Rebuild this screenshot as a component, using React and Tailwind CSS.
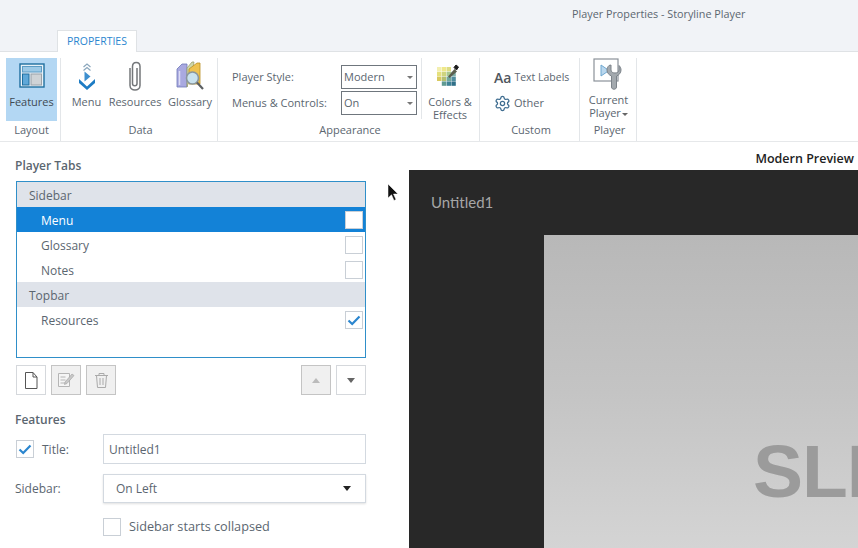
import React from "react";
import { Settings } from "lucide-react";

function FeaturesIcon() {
  return (
    <svg width="26" height="26" viewBox="0 0 26 26">
      <rect x="1" y="1" width="24" height="23" fill="#e8f1f8" stroke="#1f6f9f" strokeWidth="1.4" />
      <rect x="3.5" y="3.5" width="19" height="5.5" fill="#9cc9e6" stroke="#5c9cc4" />
      <rect x="3.5" y="11" width="6.5" height="11" fill="#5fa8d8" stroke="#1f6f9f" />
      <rect x="12" y="11" width="10.5" height="11" fill="#cfd3d6" stroke="#9aa2a8" />
    </svg>
  );
}

function MenuIcon() {
  return (
    <svg width="20" height="30" viewBox="0 0 20 30">
      <path d="M6.5 6 10 3l3.500 3M6.500 9.500 10 6.500l3.500 3" fill="none" stroke="#8aa6bc" strokeWidth="1.200" />
      <path d="M7.500 10.500v10l6-5z" fill="#3d8fcf" />
      <path d="M2 18l8 7.500 8-7.500v4l-8 7-8-7z" fill="#1d7cc4" />
    </svg>
  );
}

function PaperclipIcon() {
  return (
    <svg width="14" height="31" viewBox="0 0 14 31">
      <path
        d="M2 7v17.500c0 6 10 6 10 0V5.500c0-5.500-7.500-5.500-7.500 0v17c0 3 4.500 3 4.500 0V7"
        fill="none"
        stroke="#74777a"
        strokeWidth="1.500"
      />
    </svg>
  );
}

function GlossaryIcon() {
  return (
    <svg width="29" height="31" viewBox="0 0 29 31">
      <path d="M1 8l5-5h5v23H1z" fill="#a9a9e0" stroke="#6f78b8" strokeWidth="0.800" />
      <path d="M3.500 10v14" stroke="#dcdcf5" strokeWidth="1.500" />
      <path d="M11 7l5-6h2l-1 6-6 19z" fill="#cfd8a8" stroke="#9aa070" strokeWidth="0.800" />
      <path d="M13 8l8-6h3v21H13z" fill="#eec24f" stroke="#b98f25" strokeWidth="0.800" />
      <circle cx="16.500" cy="17" r="6" fill="#c9e2ee" stroke="#8a969c" strokeWidth="1.600" />
      <path d="M21 21.500l6 6.500" stroke="#5c5f62" strokeWidth="2.200" />
    </svg>
  );
}

function ColorsIcon() {
  const cells = [
    ["#f3efb0", "#efe88a", "#dcdc84", ""],
    ["#e5e07c", "#cfd47e", "#a9c88f", "#7eb0a8"],
    ["#d8c95e", "#b5bf70", "#72a89c", "#4f8d9e"],
    ["", "#5f9a92", "#3f8396", "#2f6f88"],
  ];
  return (
    <svg width="24" height="24" viewBox="0 0 24 24">
      {cells.map((row, r) =>
        row.map((c, i) => c && <rect key={`${r}-${i}`} x={1 + i * 4.8} y={4 + r * 4.8} width="4.4" height="4.4" fill={c} />)
      )}
      <path d="M12 13.500l6.500-7.500 2.500 2.500-7.500 6.500z" fill="#5c5f50" />
      <path d="M18 4.500l2-2.500 2.500 2-2 3z" fill="#1d1d1d" stroke="#1d1d1d" />
    </svg>
  );
}

function PlayerIcon() {
  return (
    <svg width="32" height="33" viewBox="0 0 32 33">
      <rect x="1" y="1" width="24" height="22" fill="#fff" stroke="#8b9299" strokeWidth="1.2" />
      <path d="M8 7v11l8-5.500z" fill="#b9d7ee" stroke="#6fa8d0" />
      <path
        d="M16 7.500c-1.500 1.500-2 3-2 4.500 0 3 2 5 4.500 6v11c0 3 5 3 5 0V18c2.500-1 4.500-3 4.500-6 0-1.500-.5-3-2-4.500V12c0 2-2 3-4 3s-4-1-4-3V7z"
        fill="#a3a9ae"
        stroke="#7c838a"
      />
    </svg>
  );
}

function Check({ size = 14 }) {
  return (
    <svg width={size} height={size} viewBox="0 0 14 14">
      <path d="M1.500 7.500 5.200 11 12.500 3.500" fill="none" stroke="#2b86cf" strokeWidth="2.200" />
    </svg>
  );
}

function Box({ checked, fill }) {
  return (
    <div className={`w-[18px] h-[18px] border border-[#c9cfd6] flex items-center justify-center shrink-0 ${fill ? "bg-white" : ""}`}>
      {checked && <Check />}
    </div>
  );
}

function LargeButton({ icon, label, active }) {
  return (
    <div className={`flex flex-col items-center h-[63px] ${active ? "bg-[#b3d7f3] w-[51px]" : ""}`}>
      <div className="h-[36px] flex items-center justify-center">{icon}</div>
      <div className={`text-[11px] leading-[15px] ${active ? "text-[#3f4a52]" : "text-[#5b6670]"}`}>{label}</div>
    </div>
  );
}

function Group({ width, label, children }) {
  return (
    <div className="flex flex-col h-[83px] border-r border-[#e3e6e9] shrink-0" style={{ width }}>
      <div className="h-[63px] flex">{children}</div>
      <div className="h-[18px] pl-[3px] leading-[18px] text-center text-[11px] text-[#5b6670]">{label}</div>
    </div>
  );
}

function RibbonSelect({ value }) {
  return (
    <div className="w-[76px] h-[24px] border border-[#6f767d] flex items-center justify-between pl-[2px] pr-[3px] text-[11px] text-[#5b6670]">
      <span>{value}</span>
      <span className="w-0 h-0 border-x-[3px] border-x-transparent border-t-[3px] border-t-[#777]" />
    </div>
  );
}

function Row({ label, selected, checked }) {
  return (
    <div className={`h-[25px] flex items-center justify-between pl-[24px] pr-[2px] text-[12px] ${selected ? "bg-[#1382d7] text-white" : "text-[#5b6670]"}`}>
      <span className="pt-[2px]">{label}</span>
      <Box checked={checked} fill={selected} />
    </div>
  );
}

function Header({ label }) {
  return <div className="h-[25px] flex items-center pl-[12px] pt-[2px] bg-[#dfe3ea] text-[12px] text-[#5b6670]">{label}</div>;
}

function ToolButton({ disabled, children }) {
  return (
    <div className={`w-[30px] h-[30px] border flex items-center justify-center ${disabled ? "bg-[#f0f0f0] border-[#c4c4c4]" : "bg-white border-[#d5d8dc]"}`}>
      {children}
    </div>
  );
}

export default function App() {
  return (
    <div className="w-[858px] h-[548px] overflow-hidden bg-white relative font-['Open_Sans','Noto_Sans',sans-serif]">
      {/* title bar */}
      <div className="h-[52px] bg-[#f1f3f7] border-b border-[#dfe2e5] relative">
        <div className="pl-[572px] pt-[6px] text-[10.8px] leading-[16px] text-[#5b6670]">Player Properties - Storyline Player</div>
        <div className="absolute left-[57px] top-[30px] w-[80px] h-[22px] bg-white border border-b-0 border-[#dfe2e5] text-center text-[10.5px] leading-[21px] text-[#2b86cf]">
          PROPERTIES
        </div>
      </div>

      {/* ribbon */}
      <div className="h-[90px] border-b border-[#e6e8ea] pt-[6px] flex">
        <Group width={61} label="Layout">
          <div className="pl-[6px]">
            <LargeButton active icon={<FeaturesIcon />} label="Features" />
          </div>
        </Group>
        <Group width={157} label="Data">
          <div className="flex pl-[10px] gap-[7px]">
            <div className="w-[31px]">
              <LargeButton icon={<MenuIcon />} label="Menu" />
            </div>
            <div className="w-[52px]">
              <LargeButton icon={<PaperclipIcon />} label="Resources" />
            </div>
            <div className="w-[44px]">
              <LargeButton icon={<GlossaryIcon />} label="Glossary" />
            </div>
          </div>
        </Group>
        <Group width={262} label="Appearance">
          <div className="flex">
            <div className="w-[204px] pl-[14px] pr-[4px] pt-[7px] flex flex-col gap-[2px] border-r border-[#e3e6e9] h-[61px]">
              <div className="flex items-center justify-between text-[11px] text-[#5b6670]">
                <span>Player Style:</span>
                <RibbonSelect value="Modern" />
              </div>
              <div className="flex items-center justify-between text-[11px] text-[#5b6670]">
                <span>Menus &amp; Controls:</span>
                <RibbonSelect value="On" />
              </div>
            </div>
            <div className="w-[57px] flex flex-col items-center">
              <div className="h-[30px] pr-[5px] flex items-end">
                <ColorsIcon />
              </div>
              <div className="mt-[8px] pr-[1px] text-[11px] leading-[13px] text-center text-[#5b6670]">
                Colors &amp;
                <br />
                Effects
              </div>
            </div>
          </div>
        </Group>
        <Group width={100} label="Custom">
          <div className="pl-[14px] pt-[11px] flex flex-col gap-[10px] text-[11px] text-[#5b6670]">
            <div className="h-[16px] flex items-center gap-[3px]">
              <span className="text-[14px] font-semibold text-[#50575e]">Aa</span>
              <span className="pt-[1px] text-[10.5px]">Text Labels</span>
            </div>
            <div className="h-[16px] flex items-center gap-[3px]">
              <Settings size={17} strokeWidth={1.8} color="#3f6d90" />
              <span>Other</span>
            </div>
          </div>
        </Group>
        <Group width={57} label="Player">
          <div className="w-full pl-[1px] flex flex-col items-center">
            <PlayerIcon />
            <div className="mt-[2px] text-[11px] leading-[13px] text-center text-[#5b6670]">
              Current
              <br />
              Player
              <span className="inline-block ml-[1px] align-middle w-0 h-0 border-x-[3px] border-x-transparent border-t-[3px] border-t-[#666]" />
            </div>
          </div>
        </Group>
      </div>

      {/* body */}
      <div className="flex h-[406px]">
        <div className="w-[409px] shrink-0 pl-[16px] pr-[43px] pt-[15px]">
          <div className="-ml-px text-[12px] leading-[18px] font-semibold text-[#5b6670]">Player Tabs</div>
          <div className="mt-[6px] h-[177px] border border-[#2f8fc9]">
            <Header label="Sidebar" />
            <Row label="Menu" selected />
            <Row label="Glossary" />
            <Row label="Notes" />
            <Header label="Topbar" />
            <Row label="Resources" checked />
          </div>

          <div className="mt-[7px] flex justify-between">
            <div className="flex gap-[5px]">
              <ToolButton>
                <svg width="14" height="17" viewBox="0 0 14 17">
                  <path d="M1.500.500h7.500l4 4.500v11.500H1.500zM9 .500V5h4" fill="none" stroke="#555" />
                </svg>
              </ToolButton>
              <ToolButton disabled>
                <svg width="18" height="16" viewBox="0 0 18 16">
                  <path d="M1.500 1.500h11v13h-11zM3.500 5h5M3.500 8h5M3.500 11h5" fill="#f5f5f5" stroke="#b5b5b5" />
                  <path d="M8 10l7-8 2 1.500-7 8-2.500 1z" fill="#c8c8c8" stroke="#a0a0a0" strokeWidth="0.6" />
                </svg>
              </ToolButton>
              <ToolButton disabled>
                <svg width="15" height="16" viewBox="0 0 15 16">
                  <path d="M1 3.500h13M5 3V1.500h5V3M2.500 3.500l1 12h8l1-12M6 6v7M9 6v7" fill="none" stroke="#aaa" />
                </svg>
              </ToolButton>
            </div>
            <div className="flex gap-[5px]">
              <ToolButton disabled>
                <span className="w-0 h-0 border-x-[4px] border-x-transparent border-b-[5px] border-b-[#bbb]" />
              </ToolButton>
              <ToolButton>
                <span className="w-0 h-0 border-x-[4px] border-x-transparent border-t-[5px] border-t-[#666]" />
              </ToolButton>
            </div>
          </div>

          <div className="mt-[16px] -ml-px text-[12px] leading-[18px] font-semibold text-[#5b6670]">Features</div>

          <div className="mt-[5px] flex items-center h-[30px]">
            <div className="w-[26px]">
              <Box checked />
            </div>
            <span className="w-[61px] pt-[2px] text-[12px] text-[#5b6670]">Title:</span>
            <div className="flex-1 h-[30px] border border-[#d3d9e0] flex items-center pl-[5px] pt-[2px] text-[12px] text-[#5b6670]">Untitled1</div>
          </div>

          <div className="mt-[10px] flex items-center h-[29px]">
            <span className="w-[87px] -ml-px mr-px text-[12px] text-[#5b6670]">Sidebar:</span>
            <div className="flex-1 h-[29px] border border-[#d3d9e0] shadow-[0_1px_2px_rgba(0,0,0,0.12)] flex items-center justify-between pl-[12px] pr-[14px] text-[12px] text-[#5b6670]">
              <span>On Left</span>
              <span className="w-0 h-0 border-x-[4px] border-x-transparent border-t-[5px] border-t-[#222]" />
            </div>
          </div>

          <div className="mt-[14px] pl-[87px] flex items-center gap-[8px] text-[12.7px] text-[#5b6670]">
            <Box />
            <span>Sidebar starts collapsed</span>
          </div>
        </div>

        <div className="flex-1 min-w-0 flex flex-col">
          <div className="h-[28px] pr-[4px] pt-[6px] flex items-center justify-end text-[12.5px] font-semibold text-[#222]">Modern Preview</div>
          <div className="flex-1 bg-[#282828] flex flex-col overflow-hidden">
            <div className="h-[65px] pl-[22px] pt-[22px] font-['Lato',sans-serif] text-[15px] leading-[20px] text-[#a6a6a6]">Untitled1</div>
            <div className="flex-1 ml-[135px] bg-[linear-gradient(to_bottom,#b8b8b8,#c4c4c4_50%,#d4d4d4)] pl-[209px] pt-[192px] overflow-hidden">
              <div className="whitespace-nowrap font-['Liberation_Sans',sans-serif] font-bold text-[75px] tracking-[-1px] leading-[88px] text-[#9b9b9b]">SLIDE</div>
            </div>
          </div>
        </div>
      </div>

      {/* mouse pointer */}
      <svg className="absolute left-[387px] top-[184px]" width="12" height="18" viewBox="0 0 12 18">
        <path d="M1 0v14l3.500-3.200L7 16.500l2-1-2.500-5.500H11z" fill="#111" stroke="#fff" strokeWidth="0.5" />
      </svg>
    </div>
  );
}
